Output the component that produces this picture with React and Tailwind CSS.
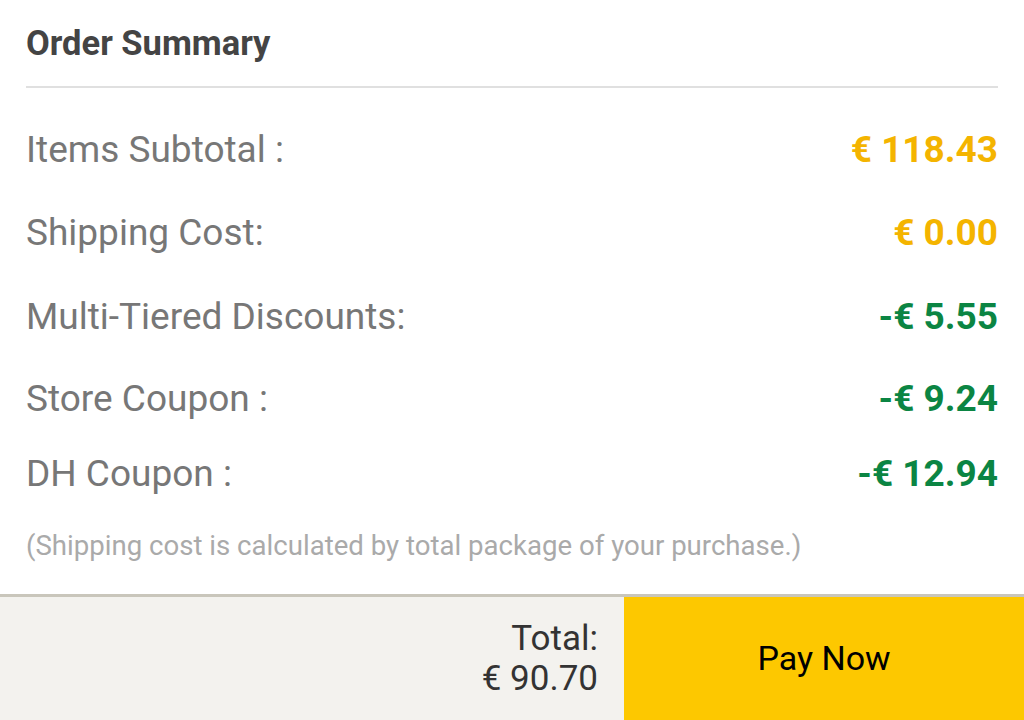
import React from 'react';

const rows = [
    { label: 'Items Subtotal :', value: '€ 118.43', tone: 'text-[#f4b400]', h: 'h-[83px]' },
    { label: 'Shipping Cost:', value: '€ 0.00', tone: 'text-[#f4b400]', h: 'h-[84px]' },
    { label: 'Multi-Tiered Discounts:', value: '-€ 5.55', tone: 'text-[#0b8543]', h: 'h-[84px]' },
    { label: 'Store Coupon :', value: '-€ 9.24', tone: 'text-[#0b8543]', h: 'h-[80px]' },
    { label: 'DH Coupon :', value: '-€ 12.94', tone: 'text-[#0b8543]', h: 'h-[70px]' },
];

const App = () => {
    return (
        <div className="w-[1024px] h-[720px] flex flex-col bg-white overflow-hidden" style={{ fontFamily: 'Roboto, "Liberation Sans", sans-serif' }}>
            <div className="flex-1 px-[26px]">
                <div className="h-[88px] flex items-center border-b-2 border-[#e0e0e0]">
                    <h1 className="text-[34.5px] font-bold text-[#444444] mt-[2px]">Order Summary</h1>
                </div>
                <div className="pt-[20px]">
                    {rows.map((row, i) => (
                        <div key={i} className={`${row.h} flex items-center justify-between`}>
                            <span className="text-[37px] text-[#777777]">{row.label}</span>
                            <span className={`text-[37px] font-bold ${row.tone}`}>{row.value}</span>
                        </div>
                    ))}
                </div>
                <p className="mt-[16px] text-[27.6px] text-[#aaaaaa]">(Shipping cost is calculated by total package of your purchase.)</p>
            </div>
            <div className="h-[126px] flex border-t-[3px] border-[#c9c6bb] bg-[#f3f2ee]">
                <div className="flex-1 flex flex-col items-end justify-center pr-[26px] text-[35px] leading-[40px] text-[#333333]">
                    <span>Total:</span>
                    <span>€ 90.70</span>
                </div>
                <button className="w-[400px] bg-[#fdc800] text-[34px] text-black">Pay Now</button>
            </div>
        </div>
    );
};

export default App;
